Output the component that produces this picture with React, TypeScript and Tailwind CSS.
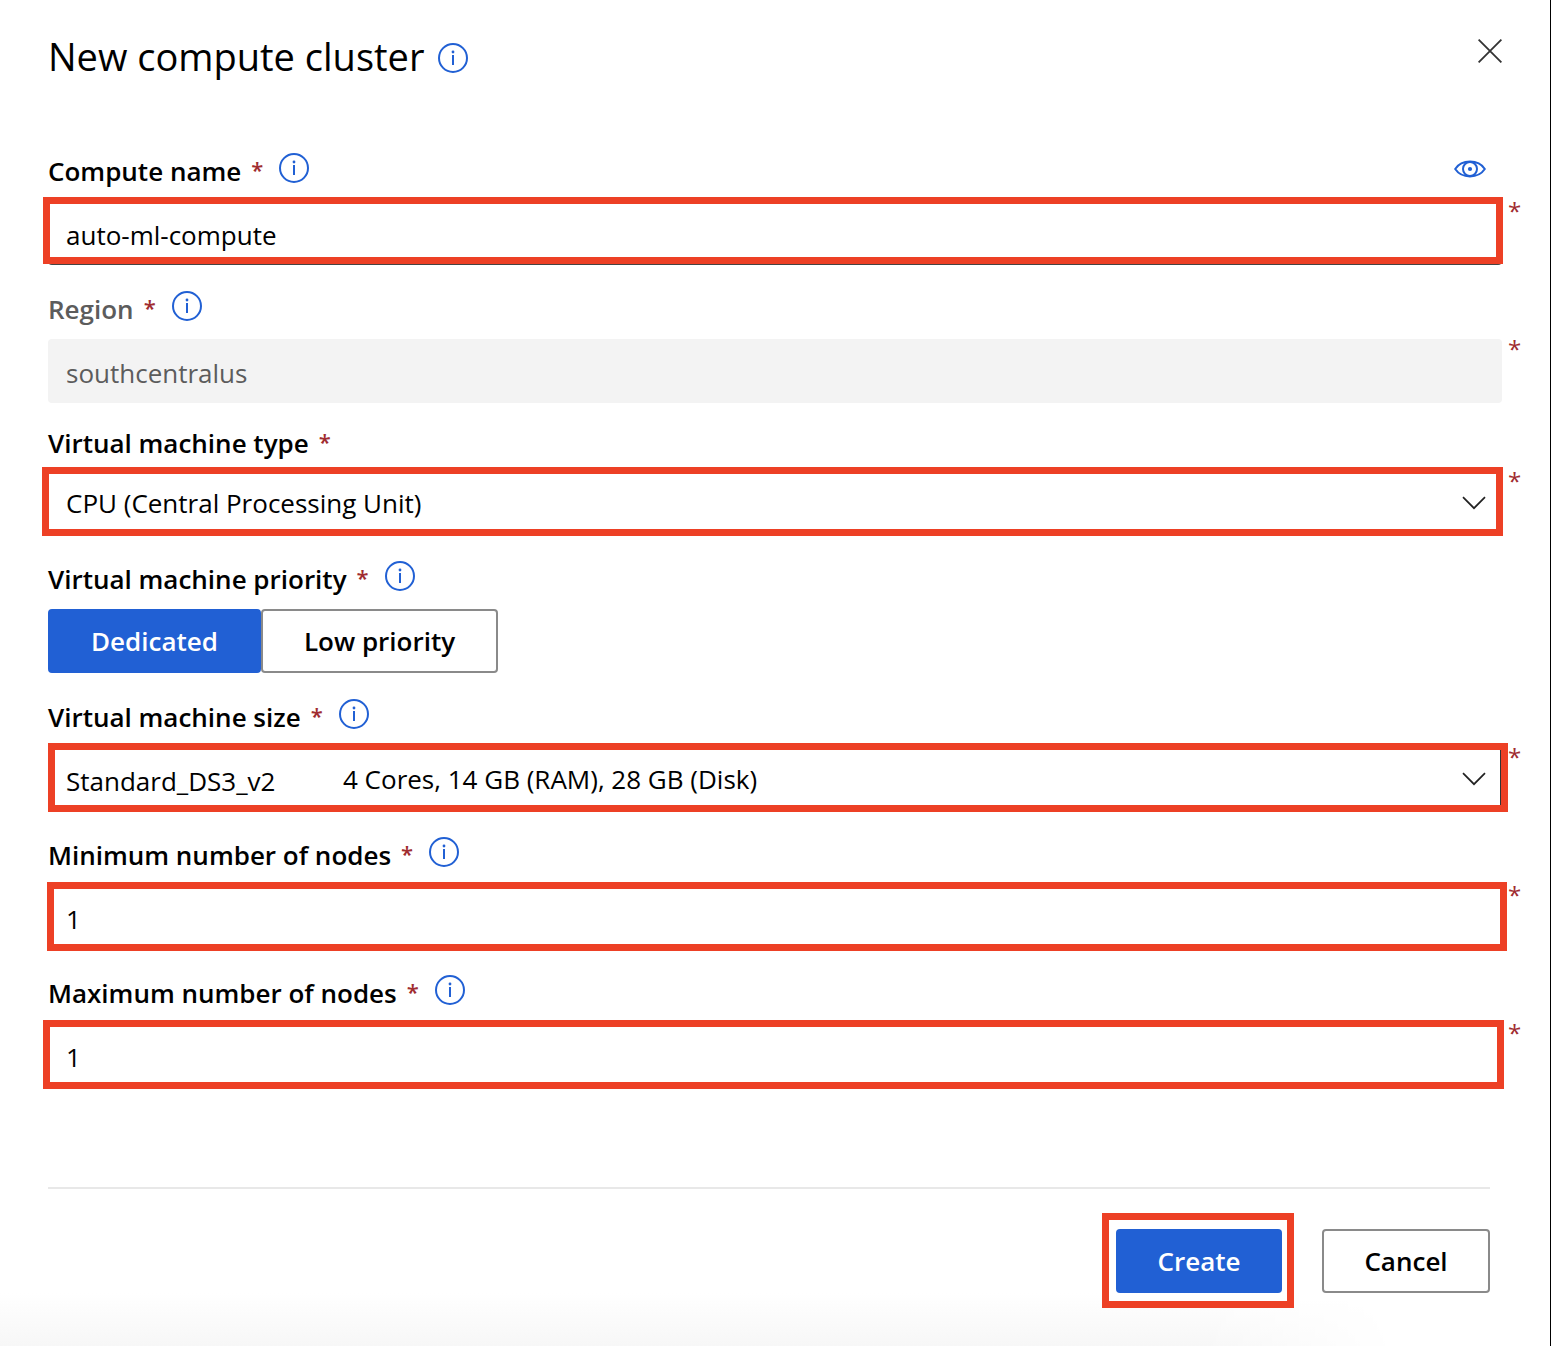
import { useState, type ReactNode } from "react";

function InfoButton({ about }: { about: string }) {
  return (
    <button type="button" aria-label={`More about ${about}`} className="size-[30px] shrink-0 text-[#2160d4]">
      <svg viewBox="0 0 30 30" className="size-full" fill="none">
        <circle cx="15" cy="15" r="14" stroke="currentColor" strokeWidth="2" />
        <path d="M15 12V22" stroke="currentColor" strokeWidth="2" />
        <circle cx="15" cy="9" r="1.400" fill="currentColor" />
      </svg>
    </button>
  );
}

function Chevron() {
  return (
    <svg
      viewBox="0 0 24 14"
      className="pointer-events-none absolute top-1/2 right-4 h-[14px] w-6 -translate-y-1/2"
      fill="none"
      stroke="#222"
      strokeWidth="1.7"
    >
      <path d="M1 1.2 12 12.2 23 1.2" />
    </svg>
  );
}

function EyeButton() {
  return (
    <button type="button" aria-label="Preview compute name" className="mr-4 ml-auto flex h-8 w-8 items-center text-[#2160d4]">
      <svg viewBox="0 0 32 18" className="h-[18px] w-8" fill="none" stroke="currentColor" strokeWidth="2">
        <path d="M1.2 9C4.5 4 9.800 1.600 16 1.600S27.500 4 30.800 9C27.500 14 22.200 16.400 16 16.400S4.500 14 1.200 9Z" />
        <circle cx="16" cy="9" r="7" />
        <circle cx="16" cy="9" r="2.100" fill="currentColor" stroke="none" />
      </svg>
    </button>
  );
}

type FieldProps = {
  id: string;
  label: string;
  info?: boolean;
  muted?: boolean;
  highlight?: string;
  marker?: boolean;
  action?: ReactNode;
  children: ReactNode;
};

function Field({ id, label, info = true, muted, highlight, marker = true, action, children }: FieldProps) {
  return (
    <div className={info ? "pt-[26px]" : "pt-[22px]"}>
      <div className={`flex h-9 items-start ${info ? "mb-3" : "mb-[10px]"}`}>
        <label
          id={`${id}-label`}
          htmlFor={id}
          className={`mr-4 flex gap-[10px] leading-9 font-semibold whitespace-nowrap ${muted ? "text-[#5c5c5c]" : "text-black"}`}
        >
          {label}
          <span className="text-[22px] leading-8 text-[#a02c30]">*</span>
        </label>
        {info && <InfoButton about={label} />}
        {action}
      </div>
      <div className="relative h-16">
        {children}
        {highlight && <div className={`pointer-events-none absolute border-[7px] border-[#ed4025] ${highlight}`} />}
        {marker && (
          <span aria-hidden="true" className="absolute top-0 left-full ml-[6px] text-2xl leading-5 text-[#a02c30]">
            *
          </span>
        )}
      </div>
    </div>
  );
}

const control = "block size-full appearance-none rounded-sm bg-white px-[18px] text-black outline-none";

export default function App() {
  const [name, setName] = useState("auto-ml-compute");
  const [min, setMin] = useState("1");
  const [max, setMax] = useState("1");
  const [priority, setPriority] = useState("Dedicated");

  return (
    <main className="min-h-screen border-r border-black bg-white px-12 pt-[31px] font-['Open_Sans',sans-serif] text-[26px] text-black">
      <header className="mb-[42px] flex items-start justify-between">
        <div className="flex h-[54px] items-center gap-[14px]">
          <h1 className="pb-1 text-[38px] whitespace-nowrap">New compute cluster</h1>
          <InfoButton about="compute clusters" />
        </div>
        <button type="button" aria-label="Close" className="-mr-2 flex size-10 items-center justify-center">
          <svg viewBox="0 0 24 24" className="size-6" fill="none" stroke="#333" strokeWidth="1.800">
            <path d="M.6.6 23.400 23.400M23.400.6.6 23.400" />
          </svg>
        </button>
      </header>

      <form onSubmit={(e) => e.preventDefault()}>
        <Field id="name" label="Compute name" action={<EyeButton />} highlight="-top-1 -right-px bottom-px -left-[5px]">
          <input id="name" value={name} onChange={(e) => setName(e.target.value)} className={`${control} border-b border-[#444] pt-1`} />
        </Field>

        <Field id="region" label="Region" muted>
          <input
            id="region"
            value="southcentralus"
            disabled
            className="block size-full rounded-sm bg-[#f3f3f3] px-[18px] pt-1 text-[#5c5c5c]"
          />
        </Field>

        <Field id="vm-type" label="Virtual machine type" info={false} highlight="-top-1 -right-px -bottom-px -left-[6px]">
          <select id="vm-type" className={control}>
            <option>CPU (Central Processing Unit)</option>
          </select>
          <Chevron />
        </Field>

        <Field id="priority" label="Virtual machine priority" marker={false}>
          <div id="priority" role="group" aria-labelledby="priority-label" className="flex h-full font-semibold">
            {["Dedicated", "Low priority"].map((p) => (
              <button
                key={p}
                type="button"
                aria-pressed={priority === p}
                onClick={() => setPriority(p)}
                className={`rounded-sm border-2 px-[41px] whitespace-nowrap ${
                  priority === p ? "border-[#2160d4] bg-[#2160d4] text-white" : "border-[#8a8a8a] bg-white text-black"
                }`}
              >
                {p}
              </button>
            ))}
          </div>
        </Field>

        <Field id="vm-size" label="Virtual machine size" highlight="-top-1 -right-[6px] -bottom-px left-0">
          <select id="vm-size" className={`${control} border-r-2 border-[#333] pt-1`}>
            <option>Standard_DS3_v2</option>
          </select>
          <span className="pointer-events-none absolute inset-y-0 left-[295px] flex items-center whitespace-nowrap">
            4 Cores, 14 GB (RAM), 28 GB (Disk)
          </span>
          <Chevron />
        </Field>

        <Field id="min" label="Minimum number of nodes" highlight="-top-[3px] -right-[5px] -bottom-[2px] -left-px">
          <input id="min" inputMode="numeric" value={min} onChange={(e) => setMin(e.target.value)} className={`${control} pt-1`} />
        </Field>

        <Field id="max" label="Maximum number of nodes" highlight="-top-[3px] -right-[2px] -bottom-[2px] -left-[5px]">
          <input id="max" inputMode="numeric" value={max} onChange={(e) => setMax(e.target.value)} className={`${control} pt-1`} />
        </Field>

        <footer className="mt-[100px] mr-3 flex justify-end gap-10 border-t-2 border-[#e8e8e8] pt-10 font-semibold">
          <div className="relative z-10">
            <button type="submit" className="h-16 w-[166px] rounded-sm bg-[#2160d4] text-white">
              Create
            </button>
            <div className="pointer-events-none absolute -top-4 -right-3 -bottom-[15px] -left-[14px] border-[7px] border-[#ed4025]" />
          </div>
          <button type="button" className="h-16 w-[168px] rounded-sm border-2 border-[#8a8a8a] bg-white">
            Cancel
          </button>
        </footer>
      </form>
      <div className="-ml-12 h-[53px] bg-linear-to-t from-[#f7f7f7] to-white [mask-image:linear-gradient(to_right,black_80%,transparent_93%)]" />
    </main>
  );
}
